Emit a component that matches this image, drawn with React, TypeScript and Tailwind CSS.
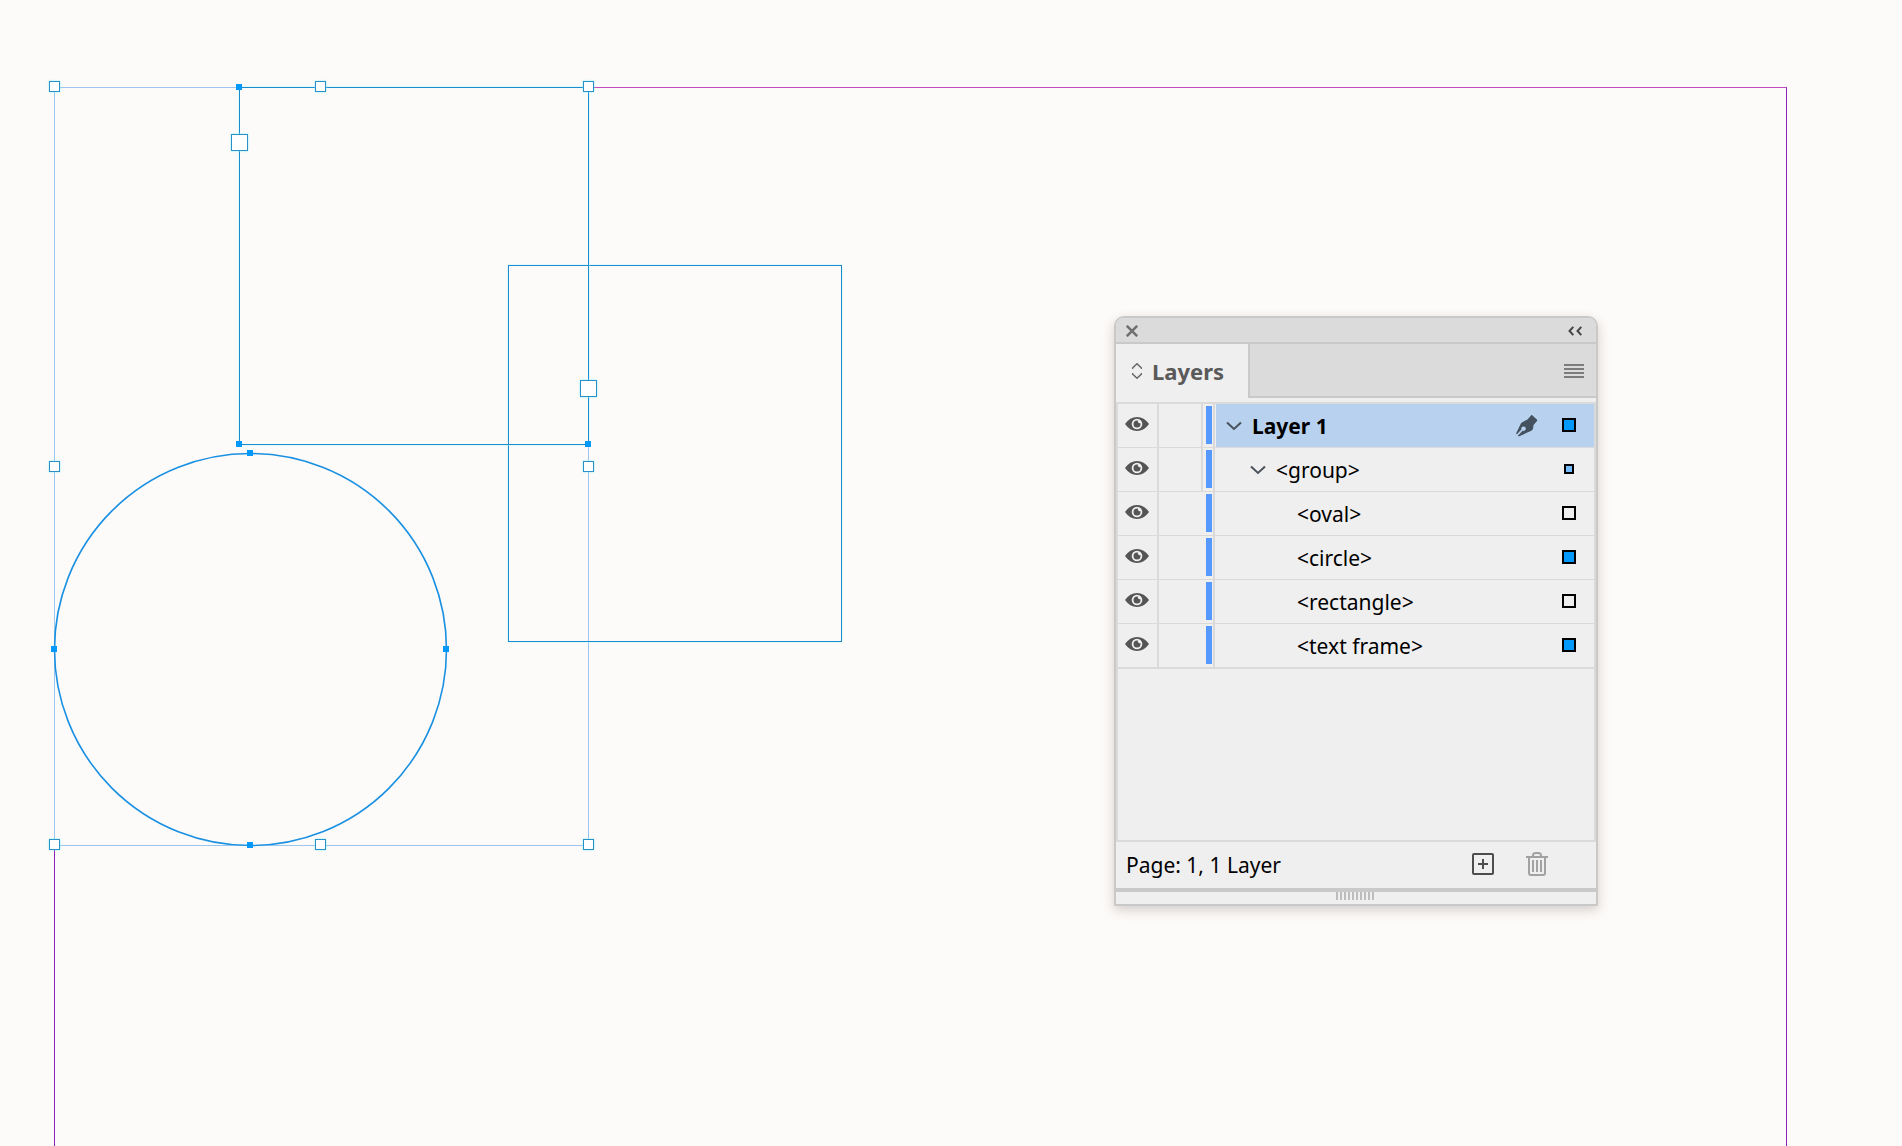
import { useState } from "react";
import type { ReactNode } from "react";

type Marker = "selected" | "partial" | "none";

type LayerItem = {
  name: string;
  depth: 0 | 1 | 2;
  marker: Marker;
};

const layers: LayerItem[] = [
  { name: "Layer 1", depth: 0, marker: "selected" },
  { name: "<group>", depth: 1, marker: "partial" },
  { name: "<oval>", depth: 2, marker: "none" },
  { name: "<circle>", depth: 2, marker: "selected" },
  { name: "<rectangle>", depth: 2, marker: "none" },
  { name: "<text frame>", depth: 2, marker: "selected" },
];

// Canvas coordinates of the frame handles, by kind.
const anchors = [
  "left-[236px] top-[84px]",
  "left-[236px] top-[441px]",
  "left-[585px] top-[441px]",
  "left-[247px] top-[450px]",
  "left-[247px] top-[842px]",
  "left-[51px] top-[646px]",
  "left-[443px] top-[646px]",
];

const handles = [
  "left-[49px] top-[81px]",
  "left-[315px] top-[81px]",
  "left-[583px] top-[81px]",
  "left-[49px] top-[461px]",
  "left-[583px] top-[461px]",
  "left-[49px] top-[839px]",
  "left-[315px] top-[839px]",
  "left-[583px] top-[839px]",
];

const ports = ["left-[231px] top-[134px]", "left-[580px] top-[380px]"];

function Canvas() {
  return (
    <div aria-hidden="true">
      <div className="absolute top-[87px] right-[115px] bottom-0 left-[54px] border-x border-t border-x-[#8a24bb] border-t-[#c24bc2]" />
      <div className="absolute top-[87px] left-[54px] h-[759px] w-[535px] border border-[#9cc6ec] bg-[#fdfbf9]" />
      <div className="absolute top-[265px] left-[508px] h-[377px] w-[334px] border border-[#1a8ccf] shadow-[0_0_2px_#b4f4fc]" />
      <div className="absolute top-[87px] left-[239px] h-[358px] w-[350px] border border-[#1a8ccf] shadow-[0_0_2px_#b4f4fc]" />
      <svg className="absolute top-[452px] left-[53px] size-[395px]" viewBox="0 0 395 395" fill="none">
        <circle cx="197.5" cy="197.5" r="196" stroke="#1990e2" strokeWidth="1.6" />
      </svg>
      {handles.map((position) => (
        <span key={position} className={`absolute size-[11px] border border-[#2a90c8] bg-white shadow-[0_0_2px_#8ceefa] ${position}`} />
      ))}
      {ports.map((position) => (
        <span key={position} className={`absolute size-[17px] border border-[#2a90c8] bg-white shadow-[0_0_2px_#8ceefa] ${position}`} />
      ))}
      {anchors.map((position) => (
        <span key={position} className={`absolute size-1.5 bg-[#0399fb] ${position}`} />
      ))}
    </div>
  );
}

function EyeIcon() {
  return (
    <svg width="24" height="14" viewBox="0 0 24 14" aria-hidden="true">
      <path d="M0 7C3.2 2.4 7.2 0 12 0s8.800 2.400 12 7c-3.200 4.600-7.200 7-12 7S3.200 11.600 0 7Z" fill="#555" />
      <circle cx="12" cy="7" r="5.300" fill="#efefef" />
      <path d="M12 3.500a3.500 3.500 0 1 0 3.500 3.500c0-.4-.1-.8-.2-1.100a1.700 1.700 0 0 1-2.300-2.300c-.3-.1-.6-.1-1-.1Z" fill="#555" />
    </svg>
  );
}

function ChevronIcon() {
  return (
    <svg width="16" height="10" viewBox="0 0 16 10" fill="none" stroke="#4a535c" strokeWidth="2" aria-hidden="true">
      <path d="m1 1.500 7 6.500 7-6.500" />
    </svg>
  );
}

function PenIcon() {
  return (
    <svg width="22" height="22" viewBox="0 0 22 22" aria-hidden="true">
      <path
        d="M15 .4c.5-.4 1-.4 1.400 0l4.500 4.200c.5.500.5.900.1 1.400l-3.400 3.900-.6 3.600c-.2 1-.7 1.700-1.700 2.200L3.300 21.200c-.4.200-.7.200-1 0l-.5-.5 4.800-4.900c.9.300 1.800.100 2.500-.6.900-.9.900-2.200 0-3.100s-2.200-.9-3.100 0c-.7.700-.9 1.600-.6 2.500L.7 19.400l-.3-.3c-.3-.3-.3-.6-.1-1L4.500 9.200c.5-1.100 1.100-1.800 2.200-2.300l4.800-2.300L15 .4Z"
        fill="#44525f"
      />
    </svg>
  );
}

function TrashIcon() {
  return (
    <svg width="22" height="24" viewBox="0 0 22 24" fill="none" stroke="#a2a2a2" strokeWidth="2" aria-hidden="true">
      <path d="M0 5h22M7 4.500V3.500C7 2 8 1 9.500 1h3C14 1 15 2 15 3.500v1M3 5v16c0 1.300.7 2 2 2h12c1.300 0 2-.7 2-2V5M7 8v12M11 8v12M15 8v12" />
    </svg>
  );
}

function IconButton({ label, children, className = "" }: { label: string; children: ReactNode; className?: string }) {
  return (
    <button type="button" aria-label={label} className={`grid shrink-0 place-items-center ${className}`}>
      {children}
    </button>
  );
}

function SelectionMarker({ marker }: { marker: Marker }) {
  const styles = {
    selected: "size-3.5 bg-[#0399fb]",
    partial: "size-2.5 bg-[#76bbfb]",
    none: "size-3.5",
  };
  return <span className={`block border-2 border-black ${styles[marker]}`} />;
}

function LayerRow({
  layer,
  open,
  onToggle,
}: {
  layer: LayerItem;
  open: boolean;
  onToggle: () => void;
}) {
  const [visible, setVisible] = useState(true);
  const indents = { 0: "pl-2.5", 1: "pl-[34px]", 2: "pl-[81px]" };
  const isRoot = layer.depth === 0;
  const isParent = layer.depth < 2;

  return (
    <li className="flex h-11 border-b border-[#dadada]">
      <button
        type="button"
        aria-label={`Toggle visibility of ${layer.name}`}
        aria-pressed={visible}
        onClick={() => setVisible(!visible)}
        className="flex w-[41px] shrink-0 items-start border-r-2 border-[#dadada] pt-[13px] pl-[7px]"
      >
        {visible && <EyeIcon />}
      </button>
      <button
        type="button"
        aria-label={`Toggle lock of ${layer.name}`}
        className={`w-11 shrink-0 ${isParent ? "border-r-2 border-[#dadada]" : ""}`}
      />
      <span className="flex w-3 shrink-0 justify-end border-r-2 border-[#dadada] pt-0.5 pr-px">
        <span className="h-[38px] w-1.5 bg-[#5599ff]" />
      </span>
      <div className={`ml-px flex min-w-0 flex-1 items-center ${indents[layer.depth]} ${isRoot ? "bg-[#b7d1ee]" : ""}`}>
        {isParent && (
          <button type="button" aria-label={`Expand ${layer.name}`} aria-expanded={open} onClick={onToggle} className="mr-2.5 shrink-0">
            <ChevronIcon />
          </button>
        )}
        <span className={`flex-1 whitespace-nowrap text-[21px] leading-8 text-black ${isRoot ? "font-bold" : ""}`}>{layer.name}</span>
        {isRoot && <PenIcon />}
        <IconButton label={`Select ${layer.name}`} className="mr-2.5 ml-4 size-[30px] pb-0.5">
          <SelectionMarker marker={layer.marker} />
        </IconButton>
      </div>
    </li>
  );
}

function LayersPanel() {
  const [openDepth, setOpenDepth] = useState(2);
  const rows = layers.filter((layer) => layer.depth <= openDepth);

  return (
    <section
      aria-label="Layers"
      className="absolute top-[316px] left-[1114px] flex h-[590px] w-[484px] flex-col overflow-hidden rounded-t-[10px] border-2 border-[#c9c9c9] bg-[#efefef] shadow-[0_4px_12px_rgba(60,40,40,0.22)]"
    >
      <header className="flex h-[26px] shrink-0 items-center justify-between border-b-2 border-[#c9c9c9] bg-[#dbdbdb] pt-0.5 pr-3.5 pl-2.5">
        <IconButton label="Close">
          <svg width="12" height="12" viewBox="0 0 12 12" stroke="#707070" strokeWidth="2.500" aria-hidden="true">
            <path d="m.8.8 10.400 10.400M11.200.8.800 11.200" />
          </svg>
        </IconButton>
        <IconButton label="Collapse panel">
          <svg width="14" height="10" viewBox="0 0 14 10" fill="none" stroke="#444" strokeWidth="2" aria-hidden="true">
            <path d="M5.300.8 1.500 5l3.800 4.200M13.300.8 9.500 5l3.800 4.200" />
          </svg>
        </IconButton>
      </header>

      <div className="flex h-[58px] shrink-0">
        <button type="button" className="flex w-[132px] items-center gap-2.5 pb-1 pl-4 text-[22px] leading-8 font-bold text-[#5a5a5a]">
          <svg width="10" height="16" viewBox="0 0 10 16" fill="none" stroke="#666" strokeWidth="1.500" aria-hidden="true">
            <path d="M.5 6V5L5 .8 9.500 5v1M.5 10v1L5 15.200 9.500 11v-1" />
          </svg>
          Layers
        </button>
        <div className="mb-1 flex flex-1 items-center justify-end border-b-2 border-l-2 border-[#c9c9c9] bg-[#dbdbdb] pt-0.5 pr-3">
          <IconButton label="Panel menu">
            <svg width="20" height="14" viewBox="0 0 20 14" stroke="#7c7c7c" strokeWidth="2" aria-hidden="true">
              <path d="M0 1h20M0 5h20M0 9h20M0 13h20" />
            </svg>
          </IconButton>
        </div>
      </div>

      <ul className="flex-1 border-2 border-[#dadada]">
        {rows.map((layer) => (
          <LayerRow
            key={layer.name}
            layer={layer}
            open={layer.depth < openDepth}
            onToggle={() => setOpenDepth(layer.depth < openDepth ? layer.depth : layer.depth + 1)}
          />
        ))}
        <li className="h-px bg-[#dadada]" />
      </ul>

      <footer className="flex h-[50px] shrink-0 items-center border-b-4 border-[#c9c9c9] pl-2.5">
        <span className="flex-1 text-[21px] leading-8 text-black">Page: 1, 1 Layer</span>
        <IconButton label="Create new layer" className="pb-0.5">
          <svg width="22" height="22" viewBox="0 0 22 22" fill="none" stroke="#4d4d4d" strokeWidth="2" aria-hidden="true">
            <rect x="1" y="1" width="20" height="20" rx="1" />
            <path d="M11 6v10M6 11h10" />
          </svg>
        </IconButton>
        <IconButton label="Delete layer" className="mr-12 ml-8 pb-0.5">
          <TrashIcon />
        </IconButton>
      </footer>

      <div className="flex h-3 shrink-0 justify-center pr-0.5">
        <svg width="38" height="8" viewBox="0 0 38 8" stroke="#bdbdbd" strokeWidth="2" aria-hidden="true">
          <path d="M1 0v8M5 0v8M9 0v8M13 0v8M17 0v8M21 0v8M25 0v8M29 0v8M33 0v8M37 0v8" />
        </svg>
      </div>
    </section>
  );
}

export default function App() {
  return (
    <main className="relative min-h-screen overflow-hidden bg-[#fdfbf9] font-['Noto_Sans','Open_Sans',sans-serif]">
      <Canvas />
      <LayersPanel />
    </main>
  );
}
